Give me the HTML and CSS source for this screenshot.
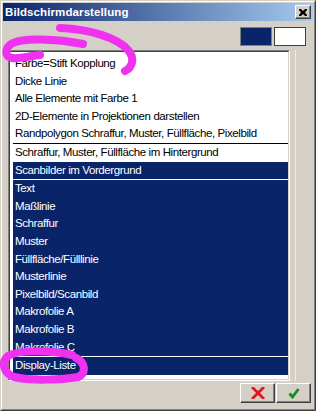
FILE: index.html
```html
<!DOCTYPE html>
<html>
<head>
<meta charset="utf-8">
<link rel="stylesheet" href="styles.css">
</head>
<body>
<div class="window">
  <div class="frame">
    <div class="titlebar">
      <span class="title">Bildschirmdarstellung</span>
      <span class="close"><svg width="8" height="7" viewBox="0 0 8 7"><path d="M0 0h2l2 2 2-2h2v1l-2 2.5 2 2.5v1h-2l-2-2-2 2h-2v-1l2-2.5-2-2.5z" fill="#000"/></svg></span>
    </div>
    <div class="content">
      <div class="swatches">
        <span class="swatch dark"></span>
        <span class="swatch light"></span>
      </div>
      <div class="main">
        <div class="listbox">
          <div class="listinner">
            <div class="row">Farbe=Stift Kopplung</div>
            <div class="row">Dicke Linie</div>
            <div class="row">Alle Elemente mit Farbe 1</div>
            <div class="row">2D-Elemente in Projektionen darstellen</div>
            <div class="row sep">Randpolygon Schraffur, Muster, Füllfläche, Pixelbild</div>
            <div class="row">Schraffur, Muster, Füllfläche im Hintergrund</div>
            <div class="row sel gap">Scanbilder im Vordergrund</div>
            <div class="row sel">Text</div>
            <div class="row sel">Maßlinie</div>
            <div class="row sel">Schraffur</div>
            <div class="row sel">Muster</div>
            <div class="row sel">Füllfläche/Fülllinie</div>
            <div class="row sel">Musterlinie</div>
            <div class="row sel">Pixelbild/Scanbild</div>
            <div class="row sel">Makrofolie A</div>
            <div class="row sel">Makrofolie B</div>
            <div class="row sel gap">Makrofolie C</div>
            <div class="row sel">Display-Liste</div>
          </div>
        </div>
        <div class="side"></div>
      </div>
      <div class="footer">
        <span class="btn"><svg width="14" height="12" viewBox="0 0 14 12"><path d="M2 1 L12 11 M12 1 L2 11" stroke="#e8141c" stroke-width="2.8" stroke-linecap="square" fill="none"/></svg></span>
        <span class="btn"><svg width="12" height="12" viewBox="0 0 12 12"><path d="M1.5 6.5 L4.5 10 L10.5 2" stroke="#1e8a1e" stroke-width="2.8" fill="none"/></svg></span>
      </div>
    </div>
  </div>
</div>
<svg class="marks" width="316" height="411" viewBox="0 0 316 411">
  <path d="M60 28 C 90 29, 118 38, 128 50 C 135 58, 133 67, 125 71" />
  <path d="M83 44 C 58 39, 22 37, 11 44 C 4 49, 5 57, 12 58 C 20 59, 30 56, 40 55" />
  <path d="M72 355 C 50 350, 18 350, 8 356 C 1 362, 3 373, 14 377 C 30 381, 62 380, 78 377 C 87 373, 85 362, 76 358" />
</svg>
</body>
</html>
```
FILE: styles.css
```css
html, body {
  margin: 0;
  padding: 0;
}
body {
  width: 316px;
  height: 411px;
  overflow: hidden;
  position: relative;
  font-family: "Liberation Sans", Arial, sans-serif;
  font-size: 11.5px;
  letter-spacing: -0.4px;
  background: #d4d0c8;
}
.window {
  box-sizing: border-box;
  width: 316px;
  height: 411px;
  border: 1px solid;
  border-color: #d4d0c8 #404040 #404040 #d4d0c8;
  background: #d4d0c8;
}
.frame {
  box-sizing: border-box;
  height: 100%;
  border: 1px solid;
  border-color: #ffffff #808080 #808080 #ffffff;
  padding: 1px;
  display: flex;
  flex-direction: column;
}
.titlebar {
  height: 18px;
  flex: none;
  display: flex;
  align-items: center;
  background: linear-gradient(to right, #0a246a, #a6caf0);
  padding: 0 2px 0 2px;
}
.title {
  color: #fff;
  font-weight: bold;
  font-size: 11.5px;
  letter-spacing: 0.1px;
}
.close {
  margin-left: auto;
  box-sizing: border-box;
  width: 16px;
  height: 14px;
  background: #d4d0c8;
  border: 1px solid;
  border-color: #fff #404040 #404040 #fff;
  box-shadow: inset -1px -1px #808080;
  display: flex;
  align-items: center;
  justify-content: center;
}
.close svg { display: block; margin-left: -1px; }
.content {
  flex: 1;
  display: flex;
  flex-direction: column;
  padding: 6px 2px 0 5px;
}
.swatches {
  display: flex;
  justify-content: flex-end;
  gap: 2px;
  padding-right: 5px;
}
.swatch {
  box-sizing: border-box;
  width: 32px;
  height: 19px;
  border: 1px solid;
}
.swatch.dark {
  background: #0a246a;
  border-color: #808080;
  box-shadow: inset 0 0 0 1px #0a246a;
}
.swatch.light {
  background: #fff;
  border-color: #404040;
}
.main {
  margin-top: 4px;
  display: flex;
}
.listbox {
  box-sizing: border-box;
  width: 282px;
  height: 331px;
  border: 1px solid;
  border-color: #808080 #fff #fff #808080;
}
.listinner {
  box-sizing: border-box;
  height: 100%;
  background: #fff;
  border: 1px solid;
  border-color: #404040 #d4d0c8 #d4d0c8 #404040;
  padding: 3px 0 0 3px;
  display: flex;
  flex-direction: column;
}
.row {
  box-sizing: border-box;
  height: 17.6px;
  line-height: 17.6px;
  padding-left: 2px;
  white-space: nowrap;
  overflow: hidden;
  color: #000;
  flex: none;
}
.row.sep {
  border-bottom: 1px solid #000;
  height: 18.6px;
}
.row.sel {
  background: #0a246a;
  color: #fff;
}
.row.gap {
  border-bottom: 1px solid #fff;
  height: 18.6px;
}
.side {
  margin-left: 5px;
  width: 0;
  border-left: 1px solid #ecebe6;
}
.footer {
  margin-top: 2px;
  display: flex;
  justify-content: flex-end;
  gap: 1px;
}
.btn {
  box-sizing: border-box;
  width: 35px;
  height: 20px;
  border: 1px solid;
  border-color: #fff #404040 #404040 #fff;
  box-shadow: inset -1px -1px #808080;
  display: flex;
  align-items: center;
  justify-content: center;
}
.btn svg { display: block; }
.marks {
  position: absolute;
  left: 0;
  top: 0;
  pointer-events: none;
}
.marks path {
  fill: none;
  stroke: #f032f0;
  stroke-width: 8;
  stroke-linecap: round;
  stroke-linejoin: round;
}
```
